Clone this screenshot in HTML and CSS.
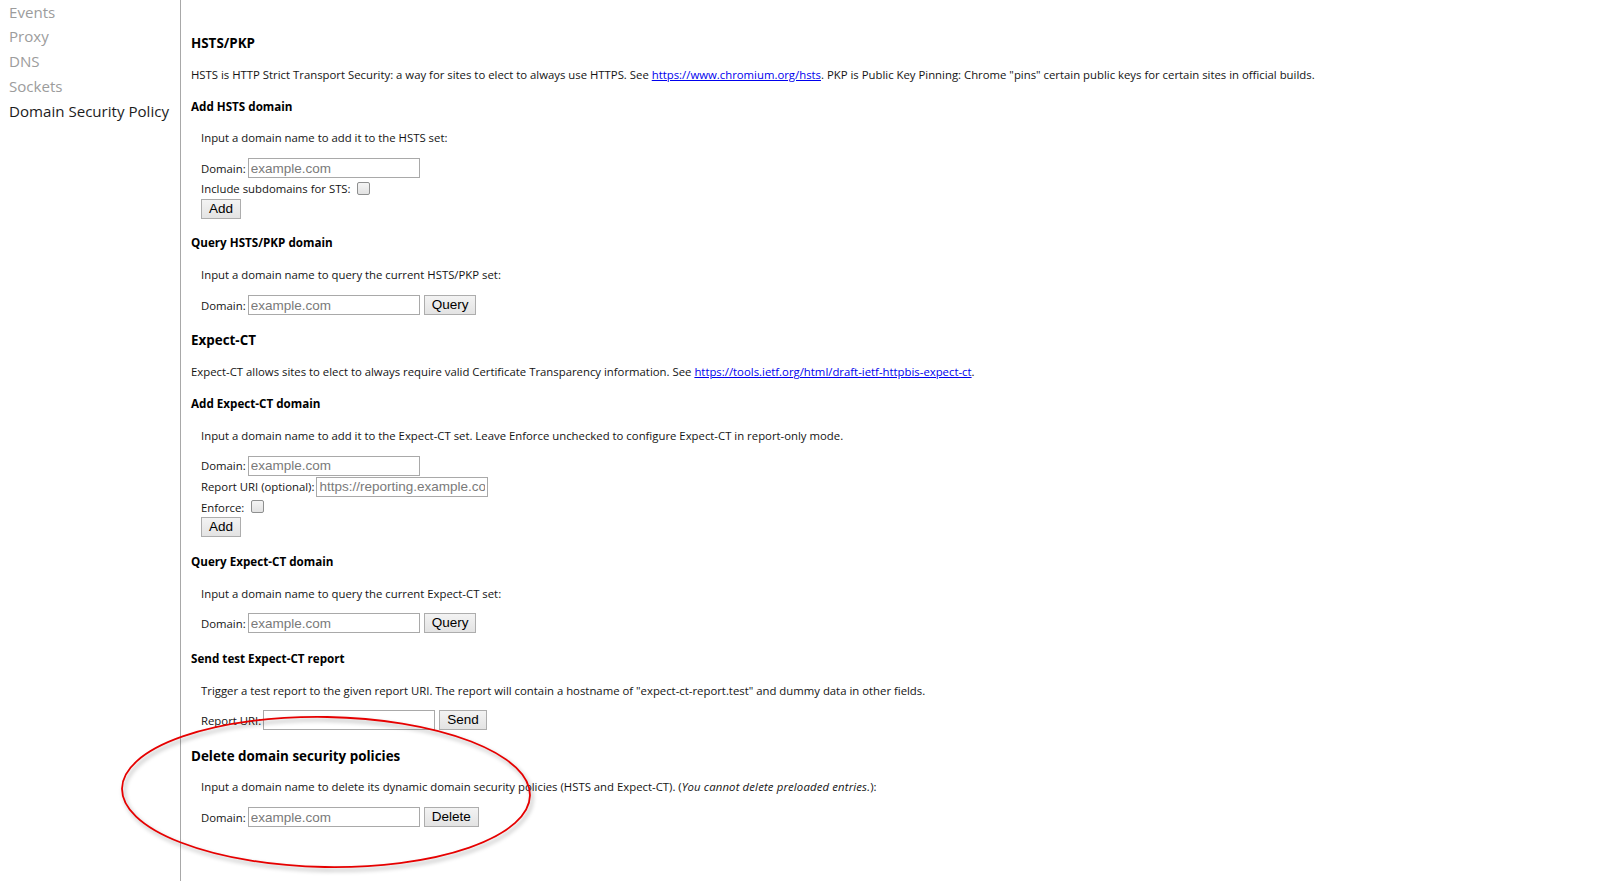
FILE: index.html
```html
<!DOCTYPE html>
<html lang="en">
<head>
<meta charset="utf-8">
<title>net-internals: Domain Security Policy</title>
<link rel="stylesheet" href="styles.css">
</head>
<body>
<div class="page">
  <nav class="sidebar">
    <ul class="tabs">
      <li class="tab">Events</li>
      <li class="tab">Proxy</li>
      <li class="tab">DNS</li>
      <li class="tab">Sockets</li>
      <li class="tab selected">Domain Security Policy</li>
    </ul>
  </nav>

  <main class="content">
    <h2 class="sec-title">HSTS/PKP</h2>
    <p class="text">HSTS is HTTP Strict Transport Security: a way for sites to elect to always use HTTPS. See <a class="link" href="#">https://www.chromium.org/hsts</a>. PKP is Public Key Pinning: Chrome "pins" certain public keys for certain sites in official builds.</p>

    <h3 class="sub-title">Add HSTS domain</h3>
    <div class="sub-body">
      <p class="text">Input a domain name to add it to the HSTS set:</p>
      <div class="form">
        <div class="row"><label class="label">Domain:</label><input class="field" type="text" placeholder="example.com"></div>
        <div class="row row-check"><label class="label">Include subdomains for STS:</label><span class="check"></span></div>
        <button class="btn" type="button">Add</button>
      </div>
    </div>

    <h3 class="sub-title">Query HSTS/PKP domain</h3>
    <div class="sub-body">
      <p class="text">Input a domain name to query the current HSTS/PKP set:</p>
      <div class="form">
        <div class="row"><label class="label">Domain:</label><input class="field" type="text" placeholder="example.com"><button class="btn" type="button">Query</button></div>
      </div>
    </div>

    <h2 class="sec-title">Expect-CT</h2>
    <p class="text">Expect-CT allows sites to elect to always require valid Certificate Transparency information. See <a class="link" href="#">https://tools.ietf.org/html/draft-ietf-httpbis-expect-ct</a>.</p>

    <h3 class="sub-title">Add Expect-CT domain</h3>
    <div class="sub-body">
      <p class="text">Input a domain name to add it to the Expect-CT set. Leave Enforce unchecked to configure Expect-CT in report-only mode.</p>
      <div class="form">
        <div class="row"><label class="label">Domain:</label><input class="field" type="text" placeholder="example.com"></div>
        <div class="row"><label class="label">Report URI (optional):</label><input class="field" type="text" placeholder="https://reporting.example.com"></div>
        <div class="row row-check"><label class="label">Enforce:</label><span class="check"></span></div>
        <button class="btn" type="button">Add</button>
      </div>
    </div>

    <h3 class="sub-title">Query Expect-CT domain</h3>
    <div class="sub-body">
      <p class="text">Input a domain name to query the current Expect-CT set:</p>
      <div class="form">
        <div class="row"><label class="label">Domain:</label><input class="field" type="text" placeholder="example.com"><button class="btn" type="button">Query</button></div>
      </div>
    </div>

    <h3 class="sub-title">Send test Expect-CT report</h3>
    <div class="sub-body">
      <p class="text">Trigger a test report to the given report URI. The report will contain a hostname of "expect-ct-report.test" and dummy data in other fields.</p>
      <div class="form">
        <div class="row"><label class="label">Report URI:</label><input class="field" type="text"><button class="btn" type="button">Send</button></div>
      </div>
    </div>

    <h2 class="sec-title">Delete domain security policies</h2>
    <div class="sub-body">
      <p class="text">Input a domain name to delete its dynamic domain security policies (HSTS and Expect-CT). (<i class="note">You cannot delete preloaded entries.</i>):</p>
      <div class="form">
        <div class="row"><label class="label">Domain:</label><input class="field" type="text" placeholder="example.com"><button class="btn" type="button">Delete</button></div>
      </div>
    </div>
  </main>

  <svg class="annotation" width="440" height="180" viewBox="0 0 440 180" aria-hidden="true">
    <ellipse cx="216" cy="87" rx="204" ry="75" transform="rotate(1 216 87)" fill="none" stroke="#e60000" stroke-width="1.8"/>
  </svg>
</div>
</body>
</html>
```

FILE: styles.css
```css
* {
  box-sizing: border-box;
}

html,
body {
  margin: 0;
  padding: 0;
  background: #fff;
}

body {
  font-family: "Open Sans", "Noto Sans", sans-serif;
  font-size: 11.35px;
  color: #141414;
  overflow: hidden;
}

.page {
  position: relative;
  display: flex;
  min-height: 881px;
}

/* ---------- sidebar ---------- */
.sidebar {
  flex: none;
  width: 181px;
  border-right: 1px solid #a8a8a8;
}

.tabs {
  list-style: none;
  margin: -0.5px 0 0;
  padding: 0;
}

.tab {
  height: 24.8px;
  line-height: 24.8px;
  padding-left: 9px;
  font-size: 15.1px;
  color: #9c9c9c;
  white-space: nowrap;
}

.tab.selected {
  color: #1c1c1c;
}

/* ---------- content ---------- */
.content {
  flex: 1;
  padding: 33px 0 0 10px;
}

.sec-title {
  margin: 11.8px 0 0;
  font-size: 13.4px;
  font-weight: bold;
  line-height: 20px;
  color: #000;
}

.content > .sec-title:first-child {
  margin-top: 0;
}

.sub-title {
  margin: 11.8px 0 0;
  font-size: 11.65px;
  font-weight: bold;
  line-height: 20px;
  color: #000;
}

.text {
  margin: 11.8px 0 0;
  line-height: 20px;
  white-space: nowrap;
}

.note {
  letter-spacing: 0.15px;
}

.link {
  color: #0000ee;
  text-decoration: underline;
}

.sub-body {
  padding-left: 10px;
}

.form {
  margin-top: 9.3px;
  padding-bottom: 3px;
}

.row {
  display: flex;
  align-items: center;
  height: 21px;
}

.row-check {
  height: 20px;
}

.label {
  margin-right: 2px;
}

.field {
  width: 172px;
  height: 20px;
  margin: 0;
  padding: 1px 2px;
  border: 1px solid #a9a9a9;
  font-family: "Liberation Sans", Arial, sans-serif;
  font-size: 13.5px;
  color: #000;
  background: #fff;
  outline: none;
}

.field::placeholder {
  color: #7a7a7a;
  opacity: 1;
}

.btn {
  display: block;
  height: 20px;
  margin: 0;
  padding: 0 7px;
  border: 1px solid #adadad;
  background: linear-gradient(#f3f3f3, #e3e3e3);
  font-family: "Liberation Sans", Arial, sans-serif;
  font-size: 13.5px;
  line-height: 18px;
  color: #000;
}

.row .btn {
  margin-left: 4px;
}

.check {
  display: inline-block;
  align-self: flex-start;
  width: 13px;
  height: 13px;
  margin: 3px 0 0 4.5px;
  border: 1px solid #8e8f8f;
  border-radius: 2px;
  background: linear-gradient(#f4f4f4, #e2e2e2);
}

/* ---------- annotation overlay ---------- */
.annotation {
  position: absolute;
  left: 110px;
  top: 705px;
  overflow: visible;
  filter: drop-shadow(2px 3px 2px rgba(0, 0, 0, 0.35));
  pointer-events: none;
}
```
